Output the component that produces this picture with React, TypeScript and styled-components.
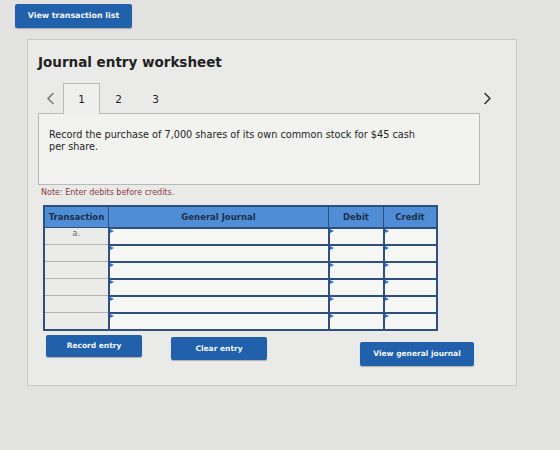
import React from 'react';
import styled, { createGlobalStyle } from 'styled-components';

const GlobalStyle = createGlobalStyle`
  html, body {
    margin: 0;
    padding: 0;
    background: #e3e3e1;
    font-family: 'DejaVu Sans', Verdana, sans-serif;
  }
`;

const Page = styled.div`
  width: 560px;
  height: 450px;
  padding: 3px 0 0 15px;
  box-sizing: border-box;
  overflow: hidden;
`;

const BlueButton = styled.button<{ $width: number; $height?: number; $fontSize?: number }>`
  width: ${(props) => props.$width}px;
  height: ${(props) => props.$height ?? 23}px;
  padding: 0;
  border: none;
  border-radius: 2px;
  background: #2160ab;
  color: #f4f6fa;
  font-family: 'DejaVu Sans', Verdana, sans-serif;
  font-size: ${(props) => props.$fontSize ?? 7.5}px;
  font-weight: bold;
  box-shadow: 0 1px 1px rgba(0, 0, 0, 0.25);
  cursor: pointer;
`;

const Panel = styled.div`
  margin: 11px 0 0 12px;
  width: 490px;
  height: 347px;
  box-sizing: border-box;
  border: 1px solid #c9c9c7;
  background: #eaeae8;
  padding: 13px 10px 0 10px;
`;

const Title = styled.h1`
  margin: 0;
  font-size: 13.5px;
  font-weight: bold;
  color: #222;
  line-height: 18px;
`;

const TabRow = styled.div`
  display: flex;
  align-items: flex-end;
  margin-top: 10px;
  height: 32px;
`;

const Chevron = styled.span<{ $dark?: boolean }>`
  display: flex;
  align-items: center;
  justify-content: center;
  width: 25px;
  height: 28px;
  color: ${(props) => (props.$dark ? '#333' : '#7a7a7a')};
`;

const Tab = styled.div<{ $active?: boolean }>`
  width: 37px;
  height: 31px;
  box-sizing: border-box;
  display: flex;
  align-items: center;
  justify-content: center;
  font-size: 10.5px;
  color: #222;
  border: 1px solid ${(props) => (props.$active ? '#b9b9b7' : 'transparent')};
  border-bottom: none;
  background: ${(props) => (props.$active ? '#efefed' : 'transparent')};
  margin-bottom: -1px;
  position: relative;
  z-index: 1;
`;

const Spacer = styled.div`
  flex: 1;
`;

const QuestionBox = styled.div`
  width: 442px;
  height: 72px;
  box-sizing: border-box;
  border: 1px solid #b9b9b7;
  background: #f2f2f0;
  padding: 15px 10px 0 10px;
  font-size: 9.7px;
  line-height: 12px;
  color: #1e1e1e;
`;

const Note = styled.div`
  margin: 3px 0 0 3px;
  font-size: 8px;
  color: #8c3a3c;
  height: 17px;
`;

const Table = styled.table`
  margin-left: 5px;
  border-collapse: collapse;
  table-layout: fixed;
  width: 388px;
  border: 2px solid #2f4f7f;
`;

const HeadCell = styled.th<{ $width: number }>`
  width: ${(props) => props.$width}px;
  height: 20px;
  padding: 0;
  background: #4f8ed6;
  border: 1px solid #2f4f7f;
  color: #1d2f4a;
  font-size: 8.5px;
  font-weight: bold;
  text-align: center;
`;

const LabelCell = styled.td`
  height: 15px;
  padding: 0;
  background: #ebebe9;
  border: 1px solid #b4b4b2;
  border-right: 2px solid #2f4f7f;
  font-size: 8px;
  color: #666;
  text-align: center;
  vertical-align: top;
  line-height: 12px;
`;

const InputCell = styled.td`
  height: 15px;
  padding: 0;
  background: #f6f6f4;
  border: 2px solid #2f4f7f;
  position: relative;

  &::before {
    content: '';
    position: absolute;
    left: 0;
    top: 0;
    border-top: 2.5px solid transparent;
    border-bottom: 2.5px solid transparent;
    border-left: 4px solid #2d6fd0;
  }
`;

const ButtonRow = styled.div`
  display: flex;
  align-items: flex-start;
  margin: 4px 0 0 8px;
  width: 428px;
`;

const ChevronIcon = ({ direction }: { direction: 'left' | 'right' }): React.ReactElement => (
  <svg width='9' height='13' viewBox='0 0 9 13' fill='none'>
    <path
      d={direction === 'left' ? 'M7 1.5 L2 6.5 L7 11.5' : 'M2 1.5 L7 6.5 L2 11.5'}
      stroke='currentColor'
      strokeWidth='1.6'
      strokeLinecap='round'
      strokeLinejoin='round'
    />
  </svg>
);

const rows = ['a.', '', '', '', '', ''];

export default function App(): React.ReactElement {
  return (
    <>
      <GlobalStyle />
      <Page>
        <BlueButton $width={117} $height={24} $fontSize={7.9}>View transaction list</BlueButton>
        <Panel>
          <Title>Journal entry worksheet</Title>
          <TabRow>
            <Chevron><ChevronIcon direction='left' /></Chevron>
            <Tab $active={true}>1</Tab>
            <Tab>2</Tab>
            <Tab>3</Tab>
            <Spacer />
            <Chevron $dark={true} style={{ marginRight: 6 }}><ChevronIcon direction='right' /></Chevron>
          </TabRow>
          <QuestionBox>
            Record the purchase of 7,000 shares of its own common stock for $45 cash
            <br />
            per share.
          </QuestionBox>
          <Note>Note: Enter debits before credits.</Note>
          <Table>
            <thead>
              <tr>
                <HeadCell $width={63}>Transaction</HeadCell>
                <HeadCell $width={219}>General Journal</HeadCell>
                <HeadCell $width={54}>Debit</HeadCell>
                <HeadCell $width={52}>Credit</HeadCell>
              </tr>
            </thead>
            <tbody>
              {rows.map((label, index) => (
                <tr key={index}>
                  <LabelCell>{label}</LabelCell>
                  <InputCell />
                  <InputCell />
                  <InputCell />
                </tr>
              ))}
            </tbody>
          </Table>
          <ButtonRow>
            <BlueButton $width={96} $height={22}>Record entry</BlueButton>
            <BlueButton $width={96} style={{ marginLeft: 29, marginTop: 2 }}>Clear entry</BlueButton>
            <Spacer />
            <BlueButton $width={114} $height={24} style={{ marginTop: 7 }}>View general journal</BlueButton>
          </ButtonRow>
        </Panel>
      </Page>
    </>
  );
}
